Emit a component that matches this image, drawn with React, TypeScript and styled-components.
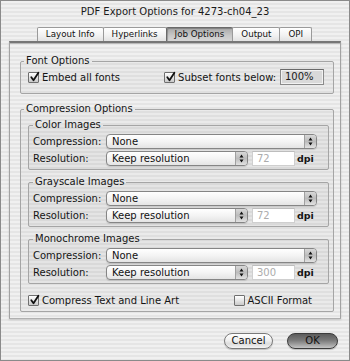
import React from 'react';
import styled, { createGlobalStyle } from 'styled-components';

const GlobalStyle = createGlobalStyle`
  html, body {
    margin: 0;
    padding: 0;
    background: #ebebeb;
  }
  body {
    font-family: "DejaVu Sans", "Liberation Sans", sans-serif;
    font-size: 10px;
    color: #151515;
  }
`;

// Aqua pinstripe background
const stripes = `repeating-linear-gradient(to bottom, #f0f0f0 0px, #f0f0f0 2px, #e5e5e5 2px, #e5e5e5 4px)`;

const Window = styled.div`
  box-sizing: border-box;
  width: 350px;
  height: 361px;
  border: 1px solid #8a8a8a;
  background: ${stripes};
  display: flex;
  flex-direction: column;
`;

const TitleBar = styled.div`
  height: 22px;
  line-height: 22px;
  text-align: center;
  font-size: 10px;
  color: #1a1a1a;
`;

const TabBar = styled.div`
  margin-top: 4px;
  display: flex;
  justify-content: center;
  position: relative;
  z-index: 1;
`;

const Tab = styled.div<{ $active?: boolean }>`
  height: 14px;
  box-sizing: border-box;
  padding: 0 8px;
  font-size: 8.7px;
  line-height: 13px;
  color: #111;
  border: 1px solid ${(p) => (p.$active ? '#6a6a6a' : '#9a9a9a')};
  border-bottom: none;
  margin-left: -1px;
  border-radius: 2px 2px 0 0;
  background: ${(p) =>
    p.$active
      ? 'linear-gradient(to bottom, #a9a9a9, #c9c9c9 60%, #d6d6d6)'
      : 'linear-gradient(to bottom, #ffffff, #f2f2f2 55%, #e2e2e2)'};
  box-shadow: ${(p) => (p.$active ? 'inset 1px 1px 1px rgba(0,0,0,0.25)' : 'none')};
`;

const Panel = styled.div`
  margin: 0 8px;
  box-sizing: border-box;
  border-top: 2px solid #767676;
  border-left: 1px solid #a2a2a2;
  border-right: 1px solid #a2a2a2;
  border-bottom: 1px solid #b0b0b0;
  box-shadow: inset 0 1px 0 #b8b8b8, 0 1px 2px rgba(0, 0, 0, 0.15);
  padding: 12px 6px 6px 10px;
  display: flex;
  flex-direction: column;
`;

const Group = styled.fieldset<{ $pad: string }>`
  margin: 0;
  min-width: 0;
  border: 1px solid #a5a5a5;
  border-radius: 2px;
  padding: ${(p) => p.$pad};
  background: rgba(0, 0, 0, 0.025);
  display: flex;
  flex-direction: column;
`;

const Legend = styled.legend<{ $shift: number }>`
  padding: 0 2px;
  margin-left: ${(p) => p.$shift}px;
  font-size: 10px;
  line-height: 12px;
  color: #151515;
`;

const Row = styled.div`
  display: flex;
  align-items: center;
  height: 15px;
`;

const CheckRow = styled.div`
  display: flex;
  align-items: center;
  height: 16px;
`;

const Label = styled.span<{ $width?: number }>`
  width: ${(p) => (p.$width ? `${p.$width}px` : 'auto')};
  flex-shrink: 0;
  white-space: nowrap;
  line-height: 15px;
`;

const CheckWrap = styled.label<{ $at?: number }>`
  display: flex;
  align-items: center;
  gap: 3px;
  white-space: nowrap;
  margin-left: ${(p) => (p.$at !== undefined ? `${p.$at}px` : '0')};
`;

const Box = styled.span`
  position: relative;
  width: 11px;
  height: 11px;
  box-sizing: border-box;
  border: 1px solid #6f6f6f;
  border-radius: 1px;
  background: linear-gradient(to bottom, #ffffff, #e6e6e6 50%, #c9c9c9);
  flex-shrink: 0;
`;

const Tick = styled.svg`
  position: absolute;
  left: 0;
  top: -1px;
  overflow: visible;
`;

const Field = styled.div<{ $width: number; $dim?: boolean }>`
  width: ${(p) => p.$width}px;
  height: 15px;
  box-sizing: border-box;
  border: 1px solid ${(p) => (p.$dim ? '#cfcfcf' : '#8a8a8a')};
  border-top-color: ${(p) => (p.$dim ? '#bdbdbd' : '#6a6a6a')};
  background: ${(p) => (p.$dim ? '#ffffff' : '#d9d9d9')};
  box-shadow: ${(p) => (p.$dim ? 'none' : 'inset 0 0 0 1px #f2f2f2')};
  color: ${(p) => (p.$dim ? '#acacac' : '#1a1a1a')};
  padding-left: 4px;
  line-height: 13px;
  flex-shrink: 0;
`;

const Select = styled.div<{ $width?: number }>`
  ${(p) => (p.$width ? `width: ${p.$width}px;` : 'flex: 1;')}
  height: 15px;
  box-sizing: border-box;
  border: 1px solid #858585;
  border-radius: 4px;
  background: linear-gradient(to bottom, #ffffff, #f4f4f4 50%, #e4e4e4);
  box-shadow: 0 1px 1px rgba(0, 0, 0, 0.12);
  display: flex;
  align-items: stretch;
  overflow: hidden;
  flex-shrink: 0;
`;

const SelectText = styled.span`
  flex: 1;
  padding-left: 5px;
  line-height: 13px;
  color: #111;
`;

const SelectArrow = styled.span`
  width: 11px;
  border-left: 1px solid #a0a0a0;
  background: linear-gradient(to bottom, #d8d8d8, #bcbcbc 50%, #e2e2e2);
  display: flex;
  align-items: center;
  justify-content: center;
`;

const Unit = styled.span`
  margin-left: 2px;
  font-weight: bold;
  font-size: 9.5px;
`;

const Footer = styled.div`
  margin-top: 14px;
  display: flex;
  justify-content: flex-end;
  gap: 14px;
  padding-right: 11px;
`;

const Button = styled.div<{ $primary?: boolean }>`
  width: ${(p) => (p.$primary ? 51 : 49)}px;
  height: 16px;
  box-sizing: border-box;
  border-radius: 8px;
  border: 1px solid ${(p) => (p.$primary ? '#3c3c3c' : '#7a7a7a')};
  background: ${(p) =>
    p.$primary
      ? 'linear-gradient(to bottom, #5c5c5c, #7a7a7a 45%, #9a9a9a 70%, #c4c4c4)'
      : 'linear-gradient(to bottom, #ffffff, #f0f0f0 45%, #dcdcdc 70%, #f4f4f4)'};
  box-shadow: 0 1px 1px rgba(0, 0, 0, 0.2);
  text-align: center;
  line-height: 14px;
  color: #111;
`;

const Check: React.FC<{ checked?: boolean }> = ({ checked }) => (
  <Box>
    {checked && (
      <Tick width="11" height="11" viewBox="0 0 11 11">
        <path d="M2.3 5.2 L4.5 8.2 L9.4 0.8" fill="none" stroke="#111" strokeWidth="1.8" strokeLinecap="round" strokeLinejoin="round" />
      </Tick>
    )}
  </Box>
);

const Popup: React.FC<{ value: string; width?: number }> = ({ value, width }) => (
  <Select $width={width}>
    <SelectText>{value}</SelectText>
    <SelectArrow>
      <svg width="5" height="9" viewBox="0 0 5 9">
        <path d="M2.5 0.5 L4.5 3.5 L0.5 3.5 Z M2.5 8.5 L4.5 5.5 L0.5 5.5 Z" fill="#111" />
      </svg>
    </SelectArrow>
  </Select>
);

const ImageGroup: React.FC<{ title: string; dpi: string; top?: number }> = ({ title, dpi, top }) => (
  <Group $pad="3px 11px 3px 4px" style={top ? { marginTop: top } : undefined}>
    <Legend $shift={0}>{title}</Legend>
    <Row>
      <Label $width={73}>Compression:</Label>
      <Popup value="None" />
    </Row>
    <Row style={{ marginTop: 2 }}>
      <Label $width={73}>Resolution:</Label>
      <Popup value="Keep resolution" width={142} />
      <Field $width={43} $dim style={{ marginLeft: 4 }}>
        {dpi}
      </Field>
      <Unit>dpi</Unit>
    </Row>
  </Group>
);

const tabs = ['Layout Info', 'Hyperlinks', 'Job Options', 'Output', 'OPI'];

export default function App() {
  return (
    <>
      <GlobalStyle />
      <Window>
        <TitleBar>PDF Export Options for 4273-ch04_23</TitleBar>
        <TabBar>
          {tabs.map((t) => (
            <Tab key={t} $active={t === 'Job Options'}>
              {t}
            </Tab>
          ))}
        </TabBar>
        <Panel>
          <Group $pad="2px 9px 8px 7px">
            <Legend $shift={-4}>Font Options</Legend>
            <CheckRow>
              <CheckWrap>
                <Check checked />
                Embed all fonts
              </CheckWrap>
              <CheckWrap $at={44}>
                <Check checked />
                Subset fonts below:
              </CheckWrap>
              <Field $width={44} style={{ marginLeft: 'auto', height: 16 }}>
                100%
              </Field>
            </CheckRow>
          </Group>

          <Group $pad="4px 4px 4px 7px" style={{ marginTop: 9 }}>
            <Legend $shift={-4}>Compression Options</Legend>
            <ImageGroup title="Color Images" dpi="72" />
            <ImageGroup title="Grayscale Images" dpi="72" top={6} />
            <ImageGroup title="Monochrome Images" dpi="300" top={6} />
            <CheckRow style={{ marginTop: 9, height: 14, justifyContent: 'space-between', paddingRight: 17 }}>
              <CheckWrap>
                <Check checked />
                Compress Text and Line Art
              </CheckWrap>
              <CheckWrap>
                <Check />
                ASCII Format
              </CheckWrap>
            </CheckRow>
          </Group>
        </Panel>
        <Footer>
          <Button>Cancel</Button>
          <Button $primary>OK</Button>
        </Footer>
      </Window>
    </>
  );
}
